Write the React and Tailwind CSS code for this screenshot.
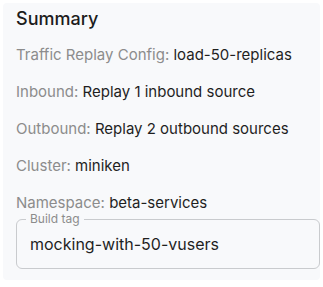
import React from "react";

const rows = [
  { label: "Traffic Replay Config:", value: "load-50-replicas" },
  { label: "Inbound:", value: "Replay 1 inbound source" },
  { label: "Outbound:", value: "Replay 2 outbound sources" },
  { label: "Cluster:", value: "miniken" },
  { label: "Namespace:", value: "beta-services" },
];

const App = () => {
  return (
    <div className="bg-white w-[323px] h-[287px] pt-[3px] pl-[3px] font-['Inter',sans-serif]">
      <div className="bg-[#f8f9fb] w-[317px] h-[277px] rounded-[4px] pl-[13px] pt-[4px]">
        {/* Title */}
        <h2 className="text-[18px] leading-6 font-medium text-[#1c1c1c]">Summary</h2>

        {/* Details */}
        <div className="mt-[14px] flex flex-col gap-[17px]">
          {rows.map((r) => (
            <p key={r.label} className="text-[15px] leading-5 whitespace-nowrap">
              <span className="text-[#8c8c8c]">{r.label}</span>{" "}
              <span className="text-[#1f1f1f]">{r.value}</span>
            </p>
          ))}
        </div>

        {/* Build tag input */}
        <div className="relative mt-[6px] w-[304px] h-[50px] border border-[#c9cbce] rounded-[6px] pl-[13px] pt-[14px]">
          <span className="absolute -top-[8px] left-[9px] px-[4px] bg-[#f8f9fb] text-[12px] leading-[14px] text-[#8c8c8c]">
            Build tag
          </span>
          <div className="text-[16px] leading-5 text-[#1f1f1f] whitespace-nowrap">mocking-with-50-vusers</div>
        </div>
      </div>
    </div>
  );
};

export default App;
